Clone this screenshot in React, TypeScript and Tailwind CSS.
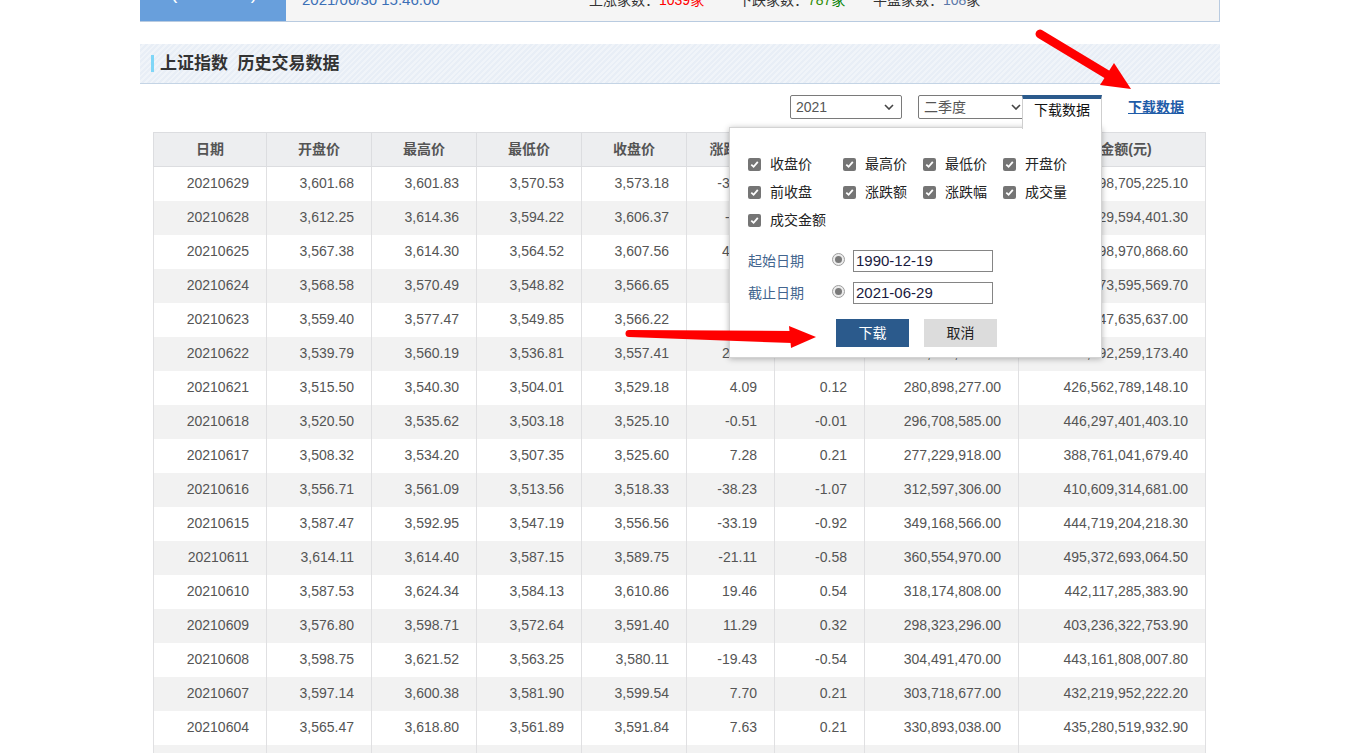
import { Fragment } from 'react';

type Row = [string, string, string, string, string, string, string, string, string];

const rows: Row[] = [
  ['20210629', '3,601.68', '3,601.83', '3,570.53', '3,573.18', '-33.19', '-0.92', '303,165,220.00', '421,298,705,225.10'],
  ['20210628', '3,612.25', '3,614.36', '3,594.22', '3,606.37', '-1.19', '-0.03', '311,402,596.00', '438,229,594,401.30'],
  ['20210625', '3,567.38', '3,614.30', '3,564.52', '3,607.56', '40.91', '1.15', '325,877,104.00', '460,898,970,868.60'],
  ['20210624', '3,568.58', '3,570.49', '3,548.82', '3,566.65', '0.43', '0.01', '288,530,412.00', '406,473,595,569.70'],
  ['20210623', '3,559.40', '3,577.47', '3,549.85', '3,566.22', '8.81', '0.25', '276,318,905.00', '392,347,635,637.00'],
  ['20210622', '3,539.79', '3,560.19', '3,536.81', '3,557.41', '28.23', '0.80', '284,061,733.00', '417,192,259,173.40'],
  ['20210621', '3,515.50', '3,540.30', '3,504.01', '3,529.18', '4.09', '0.12', '280,898,277.00', '426,562,789,148.10'],
  ['20210618', '3,520.50', '3,535.62', '3,503.18', '3,525.10', '-0.51', '-0.01', '296,708,585.00', '446,297,401,403.10'],
  ['20210617', '3,508.32', '3,534.20', '3,507.35', '3,525.60', '7.28', '0.21', '277,229,918.00', '388,761,041,679.40'],
  ['20210616', '3,556.71', '3,561.09', '3,513.56', '3,518.33', '-38.23', '-1.07', '312,597,306.00', '410,609,314,681.00'],
  ['20210615', '3,587.47', '3,592.95', '3,547.19', '3,556.56', '-33.19', '-0.92', '349,168,566.00', '444,719,204,218.30'],
  ['20210611', '3,614.11', '3,614.40', '3,587.15', '3,589.75', '-21.11', '-0.58', '360,554,970.00', '495,372,693,064.50'],
  ['20210610', '3,587.53', '3,624.34', '3,584.13', '3,610.86', '19.46', '0.54', '318,174,808.00', '442,117,285,383.90'],
  ['20210609', '3,576.80', '3,598.71', '3,572.64', '3,591.40', '11.29', '0.32', '298,323,296.00', '403,236,322,753.90'],
  ['20210608', '3,598.75', '3,621.52', '3,563.25', '3,580.11', '-19.43', '-0.54', '304,491,470.00', '443,161,808,007.80'],
  ['20210607', '3,597.14', '3,600.38', '3,581.90', '3,599.54', '7.70', '0.21', '303,718,677.00', '432,219,952,222.20'],
  ['20210604', '3,565.47', '3,618.80', '3,561.89', '3,591.84', '7.63', '0.21', '330,893,038.00', '435,280,519,932.90'],
  ['20210603', '3,578.44', '3,589.10', '3,568.21', '3,584.21', '-13.16', '-0.37', '297,412,654.00', '410,835,226,471.60'],
  ['20210602', '3,612.93', '3,616.02', '3,579.48', '3,597.14', '-27.57', '-0.76', '321,945,512.00', '452,118,662,379.20'],
];

const headers = ['日期', '开盘价', '最高价', '最低价', '收盘价', '涨跌额', '涨跌幅', '成交量', '成交金额(元)'];
const colWidths = [113, 105, 105, 105, 105, 88, 90, 154, 187];

const Check = () => (
  <span className="flex h-[13px] w-[13px] items-center justify-center rounded-[2px] bg-[#757575]">
    <svg width="9" height="9" viewBox="0 0 9 9">
      <path d="M1.3 4.6 L3.6 6.8 L7.8 1.9" fill="none" stroke="#fff" strokeWidth="1.8" />
    </svg>
  </span>
);

const Chevron = () => (
  <svg width="10" height="6" viewBox="0 0 10 6">
    <path d="M1 1 L5 5 L9 1" fill="none" stroke="#444" strokeWidth="1.6" />
  </svg>
);

const Radio = () => (
  <span className="flex h-[13px] w-[13px] items-center justify-center rounded-full border border-[#9e9e9e] bg-[#ececec]">
    <span className="h-[7px] w-[7px] rounded-full bg-[#7a7a7a]" />
  </span>
);

const checkRows = [
  ['收盘价', '最高价', '最低价', '开盘价'],
  ['前收盘', '涨跌额', '涨跌幅', '成交量'],
  ['成交金额'],
];
const checkColW = ['w-[95px]', 'w-[80px]', 'w-[80px]', 'w-[80px]'];

export default function App() {
  return (
    <div className="relative h-[753px] overflow-hidden bg-white font-['Liberation_Sans','Noto_Sans_CJK_SC',sans-serif] text-[14px] text-[#333]">
      <div className="ml-[140px] w-[1080px]">
        {/* top quote strip, mostly scrolled off */}
        <div className="flex h-[22px] overflow-hidden border-r border-b border-[#b9cbe0] bg-[#f5f5f5]">
          <div className="flex w-[146px] shrink-0 justify-center bg-[#689fdc] pl-[2px]">
            <div className="-mt-[17px] flex w-[86px] justify-between text-[19px] leading-[19px] text-white">
              <span>(</span>
              <span>-0.49%</span>
              <span>)</span>
            </div>
          </div>
          <div className="-mt-[8px] flex h-[16px] items-start pl-[16px] leading-[16px]">
            <span className="w-[287px] text-[15px] text-[#3b6fb6]">2021/06/30 15:46:00</span>
            <span className="w-[149px]">
              上涨家数：<span className="text-[#ff0000]">1039家</span>
            </span>
            <span className="w-[135px]">
              下跌家数：<span className="text-[#2a8a00]">787</span><span className="text-[#008000]">家</span>
            </span>
            <span>
              平盘家数：<span className="text-[#5a78a8]">108</span>家
            </span>
          </div>
        </div>

        {/* section title */}
        <div className="mt-[22px] flex h-[40px] items-center gap-[6px] border-b border-[#c4d4e5] bg-[repeating-linear-gradient(135deg,#e8eef6_0px,#e8eef6_2px,#f0f4f9_2px,#f0f4f9_4px)] pl-[11px]">
          <span className="h-[17px] w-[3px] bg-[#7ed6f7]" />
          <span className="text-[17px] font-bold text-[#333]">上证指数&nbsp;&nbsp;历史交易数据</span>
        </div>

        {/* controls */}
        <div className="relative mt-[11px] flex h-[37px] items-start pl-[650px]">
          <div className="flex h-[24px] w-[112px] items-center justify-between rounded-[2px] border border-[#7a7a7a] pr-[7px] pl-[5px] text-[#555]">
            <span>2021</span>
            <Chevron />
          </div>
          <div className="ml-[16px] flex h-[24px] w-[111px] items-center justify-between rounded-[2px] border border-[#7a7a7a] pr-[7px] pl-[5px] text-[#555]">
            <span>二季度</span>
            <Chevron />
          </div>
          <a className="mt-[2px] ml-[99px] font-bold text-[#1f5ca8] underline">下载数据</a>

          {/* download popup */}
          <div className="absolute top-[32px] left-[589px] z-10 h-[231px] w-[373px] border border-[#d3d3d3] bg-white pt-[22px] pl-[18px] shadow-[0_1px_6px_rgba(0,0,0,0.28)]">
            {checkRows.map((r, i) => (
              <div key={i} className="flex h-[28px] items-center">
                {r.map((label, j) => (
                  <div key={label} className={`flex items-center gap-[9px] ${checkColW[j]}`}>
                    <Check />
                    <span className="text-[#222]">{label}</span>
                  </div>
                ))}
              </div>
            ))}
            <div className="mt-[16px] flex flex-col gap-[10px]">
              {[
                ['起始日期', '1990-12-19'],
                ['截止日期', '2021-06-29'],
              ].map(([label, value]) => (
                <div key={label} className="flex h-[22px] items-center">
                  <span className="w-[84px] text-[#43658e]">{label}</span>
                  <span className="-mt-[4px]">
                    <Radio />
                  </span>
                  <div className="ml-[8px] flex h-[22px] w-[140px] items-center border border-[#858585] pl-[2px] text-[15px] text-[#1a1a40]">
                    {value}
                  </div>
                </div>
              ))}
            </div>
            <div className="mt-[15px] flex gap-[15px] pl-[88px]">
              <button className="h-[28px] w-[73px] bg-[#2b5a8c] text-white">下载</button>
              <button className="h-[28px] w-[73px] bg-[#dcdcdc] text-[#222]">取消</button>
            </div>
          </div>
          <div className="absolute top-0 left-[882px] z-20 h-[34px] w-[80px] border-t-4 border-r border-l border-t-[#2b5a8c] border-r-[#cfcfcf] border-l-[#cfcfcf] bg-white text-center leading-[22px] text-[#111]">
            下载数据
          </div>
        </div>

        {/* history table */}
        <div className="pl-[13px]">
          <table className="w-[1052px] table-fixed border-collapse text-[#555]">
            <colgroup>
              {colWidths.map((w, i) => (
                <col key={i} style={{ width: w }} />
              ))}
            </colgroup>
            <thead>
              <tr className="h-[34px] bg-[#edeef0]">
                {headers.map((h) => (
                  <th key={h} className="border border-[#dcdde0] text-center font-bold text-[#555]">
                    {h}
                  </th>
                ))}
              </tr>
            </thead>
            <tbody>
              {rows.map((r, i) => (
                <tr key={r[0]} className={`h-[34px] ${i % 2 === 0 ? 'bg-white' : 'bg-[#f2f2f2]'}`}>
                  {r.map((v, j) => (
                    <Fragment key={j}>
                      <td className="border-r border-l border-[#e0e0e2] pr-[17px] text-right">{v}</td>
                    </Fragment>
                  ))}
                </tr>
              ))}
            </tbody>
          </table>
        </div>
      </div>

      {/* red annotation arrows */}
      <svg className="pointer-events-none absolute top-0 left-0 z-30" width="1356" height="753" viewBox="0 0 1356 753">
        <line x1="1040" y1="34" x2="1108" y2="75" stroke="#ff0000" strokeWidth="9" strokeLinecap="round" />
        <polygon points="1131,89 1100,85 1114,63" fill="#ff0000" />
        <polygon points="629,330 792,331 792,343 629,337" fill="#ff0000" />
        <circle cx="629" cy="333.5" r="3.5" fill="#ff0000" />
        <polygon points="816,337 789,326 791,348" fill="#ff0000" />
      </svg>
    </div>
  );
}
